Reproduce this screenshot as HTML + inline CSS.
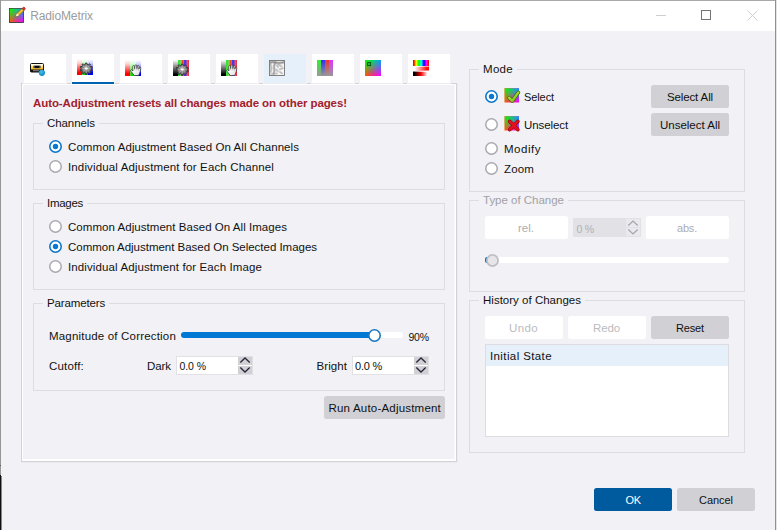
<!DOCTYPE html>
<html><head><meta charset="utf-8"><title>RadioMetrix</title>
<style>
html,body{margin:0;padding:0}
body{width:777px;height:530px;overflow:hidden;position:relative;background:#f1f1f6;font-family:"Liberation Sans", sans-serif}
#w div,#w svg,#w .t{position:absolute}
#w{position:absolute;left:0;top:0;width:777px;height:530px;overflow:hidden}
.t{white-space:pre;line-height:16px;font-family:"Liberation Sans", sans-serif}
</style></head><body><div id="w">

<div style="left:0px;top:0px;width:777px;height:31px;background:#fff"></div>
<div style="left:0px;top:0px;width:777px;height:1px;background:#a8a8a8"></div>
<div style="left:0px;top:0px;width:1px;height:475px;background:#969696"></div>
<div style="left:0px;top:465px;width:1px;height:1px;background:#5a5a5a"></div>
<div style="left:0px;top:475px;width:1px;height:55px;background:#101010"></div>
<div style="left:1px;top:476px;width:1px;height:54px;background:#84848a"></div>
<div style="left:775px;top:0px;width:1px;height:530px;background:#909090"></div>
<div style="left:776px;top:0px;width:1px;height:530px;background:#e4e4e4"></div>
<div style="left:656px;top:15px;width:10px;height:1px;background:#cfcfcf"></div>
<div style="left:701px;top:10px;width:10px;height:10px;box-sizing:border-box;border:1px solid #737373"></div>
<svg style="left:747px;top:10px" width="11" height="11" viewBox="0 0 11 11"><path d="M0.5 0.5 L10.5 10.5 M10.5 0.5 L0.5 10.5" stroke="#cfcfcf" stroke-width="1" fill="none"/></svg>
<div style="left:21px;top:83px;width:437px;height:380px;box-sizing:border-box;border:1px solid #ebebf0;border-top:none;border-left:none"></div>
<div style="left:21px;top:83px;width:436px;height:379px;box-sizing:border-box;border:1px solid #d2d2d7"></div>
<div style="left:22px;top:84px;width:434px;height:377px;box-sizing:border-box;border:1px solid #ffffff;border-bottom-width:2px"></div>
<div style="left:454px;top:84px;width:1px;height:376px;background:#f8f8fb"></div>
<div style="left:24px;top:54px;width:42px;height:29px;background:#ffffff"></div>
<div style="left:24px;top:83px;width:42px;height:1px;background:#ececf1"></div>
<div style="left:23px;top:83px;width:1px;height:1px;background:#f1f1f6"></div>
<div style="left:66px;top:83px;width:1px;height:1px;background:#f1f1f6"></div>
<div style="left:72px;top:54px;width:42px;height:29px;background:#ffffff"></div>
<div style="left:72px;top:83px;width:42px;height:1px;background:#ececf1"></div>
<div style="left:71px;top:83px;width:1px;height:1px;background:#f1f1f6"></div>
<div style="left:114px;top:83px;width:1px;height:1px;background:#f1f1f6"></div>
<div style="left:120px;top:54px;width:42px;height:29px;background:#ffffff"></div>
<div style="left:120px;top:83px;width:42px;height:1px;background:#ececf1"></div>
<div style="left:119px;top:83px;width:1px;height:1px;background:#f1f1f6"></div>
<div style="left:162px;top:83px;width:1px;height:1px;background:#f1f1f6"></div>
<div style="left:168px;top:54px;width:42px;height:29px;background:#ffffff"></div>
<div style="left:168px;top:83px;width:42px;height:1px;background:#ececf1"></div>
<div style="left:167px;top:83px;width:1px;height:1px;background:#f1f1f6"></div>
<div style="left:210px;top:83px;width:1px;height:1px;background:#f1f1f6"></div>
<div style="left:216px;top:54px;width:42px;height:29px;background:#ffffff"></div>
<div style="left:216px;top:83px;width:42px;height:1px;background:#ececf1"></div>
<div style="left:215px;top:83px;width:1px;height:1px;background:#f1f1f6"></div>
<div style="left:258px;top:83px;width:1px;height:1px;background:#f1f1f6"></div>
<div style="left:264px;top:54px;width:42px;height:29px;background:#e5f0fa"></div>
<div style="left:264px;top:83px;width:42px;height:1px;background:#ececf1"></div>
<div style="left:263px;top:83px;width:1px;height:1px;background:#f1f1f6"></div>
<div style="left:306px;top:83px;width:1px;height:1px;background:#f1f1f6"></div>
<div style="left:312px;top:54px;width:42px;height:29px;background:#ffffff"></div>
<div style="left:312px;top:83px;width:42px;height:1px;background:#ececf1"></div>
<div style="left:311px;top:83px;width:1px;height:1px;background:#f1f1f6"></div>
<div style="left:354px;top:83px;width:1px;height:1px;background:#f1f1f6"></div>
<div style="left:360px;top:54px;width:42px;height:29px;background:#ffffff"></div>
<div style="left:360px;top:83px;width:42px;height:1px;background:#ececf1"></div>
<div style="left:359px;top:83px;width:1px;height:1px;background:#f1f1f6"></div>
<div style="left:402px;top:83px;width:1px;height:1px;background:#f1f1f6"></div>
<div style="left:408px;top:54px;width:42px;height:29px;background:#ffffff"></div>
<div style="left:408px;top:83px;width:42px;height:1px;background:#ececf1"></div>
<div style="left:407px;top:83px;width:1px;height:1px;background:#f1f1f6"></div>
<div style="left:450px;top:83px;width:1px;height:1px;background:#f1f1f6"></div>
<div style="left:72px;top:82px;width:42px;height:2px;background:#0063b1"></div>
<div style="left:33px;top:123px;width:412px;height:67px;box-sizing:border-box;border:1px solid #dcdce1"></div>
<div style="left:43px;top:117px;width:56px;height:13px;background:#f1f1f6"></div>
<div style="left:33px;top:203px;width:412px;height:87px;box-sizing:border-box;border:1px solid #dcdce1"></div>
<div style="left:43px;top:197px;width:44px;height:13px;background:#f1f1f6"></div>
<div style="left:33px;top:303px;width:412px;height:88px;box-sizing:border-box;border:1px solid #dcdce1"></div>
<div style="left:43px;top:297px;width:66px;height:13px;background:#f1f1f6"></div>
<svg style="left:48.0px;top:139.0px" width="15" height="15" viewBox="0 0 15 15"><circle cx="7.5" cy="7.5" r="5.7" fill="#fff" stroke="#0b76cc" stroke-width="1.6"/><circle cx="7.5" cy="7.5" r="2.7" fill="#0878d0"/></svg>
<svg style="left:48.0px;top:159.0px" width="15" height="15" viewBox="0 0 15 15"><circle cx="7.5" cy="7.5" r="5.75" fill="#fff" stroke="#a9a9b0" stroke-width="1.5"/></svg>
<svg style="left:48.0px;top:219.0px" width="15" height="15" viewBox="0 0 15 15"><circle cx="7.5" cy="7.5" r="5.75" fill="#fff" stroke="#a9a9b0" stroke-width="1.5"/></svg>
<svg style="left:48.0px;top:239.0px" width="15" height="15" viewBox="0 0 15 15"><circle cx="7.5" cy="7.5" r="5.7" fill="#fff" stroke="#0b76cc" stroke-width="1.6"/><circle cx="7.5" cy="7.5" r="2.7" fill="#0878d0"/></svg>
<svg style="left:48.0px;top:259.0px" width="15" height="15" viewBox="0 0 15 15"><circle cx="7.5" cy="7.5" r="5.75" fill="#fff" stroke="#a9a9b0" stroke-width="1.5"/></svg>
<div style="left:181px;top:332px;width:222px;height:6px;background:#fff;border-radius:3px"></div>
<div style="left:181px;top:332px;width:194px;height:6px;background:#0078d4;border-radius:3px"></div>
<svg style="left:367px;top:328px" width="15" height="15" viewBox="0 0 15 15"><circle cx="7.5" cy="7.5" r="5.7" fill="#fff" stroke="#1878c0" stroke-width="1.6"/></svg>
<div style="left:176px;top:356px;width:77px;height:19px;box-sizing:border-box;background:#fff;border:1px solid #e0e0e5"></div><div style="left:238px;top:357px;width:14px;height:8px;background:#d0d0d5"></div><div style="left:238px;top:366px;width:14px;height:8px;background:#d0d0d5"></div><svg style="left:238px;top:356.4px" width="14" height="8" viewBox="0 0 14 8"><path d="M2.3 6.5 L7 2 L11.7 6.5" fill="none" stroke="#26263a" stroke-width="1.3"/></svg><svg style="left:238px;top:366.4px" width="14" height="8" viewBox="0 0 14 8"><path d="M2.3 1.5 L7 6 L11.7 1.5" fill="none" stroke="#26263a" stroke-width="1.3"/></svg>
<div style="left:352px;top:356px;width:77px;height:19px;box-sizing:border-box;background:#fff;border:1px solid #e0e0e5"></div><div style="left:414px;top:357px;width:14px;height:8px;background:#d0d0d5"></div><div style="left:414px;top:366px;width:14px;height:8px;background:#d0d0d5"></div><svg style="left:414px;top:356.4px" width="14" height="8" viewBox="0 0 14 8"><path d="M2.3 6.5 L7 2 L11.7 6.5" fill="none" stroke="#26263a" stroke-width="1.3"/></svg><svg style="left:414px;top:366.4px" width="14" height="8" viewBox="0 0 14 8"><path d="M2.3 1.5 L7 6 L11.7 1.5" fill="none" stroke="#26263a" stroke-width="1.3"/></svg>
<div style="left:324px;top:396px;width:121px;height:23px;background:#d0d0d5;border-radius:2.5px"></div>
<div style="left:469px;top:69px;width:276px;height:123px;box-sizing:border-box;border:1px solid #dcdce1"></div>
<div style="left:479px;top:63px;width:38px;height:13px;background:#f1f1f6"></div>
<div style="left:469px;top:200px;width:276px;height:92px;box-sizing:border-box;border:1px solid #dcdce1"></div>
<div style="left:479px;top:194px;width:89px;height:13px;background:#f1f1f6"></div>
<div style="left:469px;top:300px;width:276px;height:153px;box-sizing:border-box;border:1px solid #dcdce1"></div>
<div style="left:479px;top:294px;width:106px;height:13px;background:#f1f1f6"></div>
<svg style="left:484.0px;top:89.0px" width="15" height="15" viewBox="0 0 15 15"><circle cx="7.5" cy="7.5" r="5.7" fill="#fff" stroke="#0b76cc" stroke-width="1.6"/><circle cx="7.5" cy="7.5" r="2.7" fill="#0878d0"/></svg>
<svg style="left:484.0px;top:117.0px" width="15" height="15" viewBox="0 0 15 15"><circle cx="7.5" cy="7.5" r="5.75" fill="#fff" stroke="#a9a9b0" stroke-width="1.5"/></svg>
<svg style="left:484.0px;top:141.0px" width="15" height="15" viewBox="0 0 15 15"><circle cx="7.5" cy="7.5" r="5.75" fill="#fff" stroke="#a9a9b0" stroke-width="1.5"/></svg>
<svg style="left:484.0px;top:161.0px" width="15" height="15" viewBox="0 0 15 15"><circle cx="7.5" cy="7.5" r="5.75" fill="#fff" stroke="#a9a9b0" stroke-width="1.5"/></svg>
<div style="left:651px;top:85px;width:78px;height:23px;background:#d0d0d5;border-radius:2.5px"></div>
<div style="left:651px;top:113px;width:78px;height:23px;background:#d0d0d5;border-radius:2.5px"></div>
<div style="left:485px;top:216px;width:83px;height:23px;background:#fff;border-radius:2.5px"></div>
<div style="left:573px;top:218px;width:68px;height:19px;background:#e1e1e6"></div>
<div style="left:626px;top:219px;width:14px;height:8px;background:#e9e9ee"></div>
<div style="left:626px;top:228px;width:14px;height:8px;background:#e9e9ee"></div>
<svg style="left:626px;top:218.5px" width="14" height="8" viewBox="0 0 14 8"><path d="M2.3 6.5 L7 2 L11.7 6.5" fill="none" stroke="#a4a4ac" stroke-width="1.2"/></svg><svg style="left:626px;top:228.4px" width="14" height="8" viewBox="0 0 14 8"><path d="M2.3 1.5 L7 6 L11.7 1.5" fill="none" stroke="#a4a4ac" stroke-width="1.2"/></svg>
<div style="left:646px;top:216px;width:83px;height:23px;background:#fff;border-radius:2.5px"></div>
<div style="left:485px;top:257px;width:244px;height:6px;background:#fff;border-radius:3px"></div>
<div style="left:485px;top:257px;width:4px;height:6px;background:#0078d4;border-radius:2px 0 0 2px"></div>
<svg style="left:485px;top:253px" width="15" height="15" viewBox="0 0 15 15"><circle cx="7.5" cy="7.5" r="5.6" fill="#e6e6ea" stroke="#bebec4" stroke-width="1.8"/></svg>
<div style="left:485px;top:316px;width:78px;height:23px;background:#fff;border-radius:2.5px"></div>
<div style="left:568px;top:316px;width:78px;height:23px;background:#fff;border-radius:2.5px"></div>
<div style="left:651px;top:316px;width:78px;height:23px;background:#d0d0d5;border-radius:2.5px"></div>
<div style="left:485px;top:344px;width:244px;height:93px;box-sizing:border-box;background:#fff;border:1px solid #dcdce1"></div>
<div style="left:486px;top:345px;width:242px;height:21px;background:#e5f0fa"></div>
<div style="left:594px;top:488px;width:78px;height:23px;background:#005a9e;border-radius:2.5px"></div>
<div style="left:677px;top:488px;width:78px;height:23px;background:#d0d0d5;border-radius:2.5px"></div>
<svg width="0" height="0" style="left:0;top:0"><defs>
<radialGradient id="gg" cx="0.5" cy="0.45" r="0.6"><stop offset="0" stop-color="#c0c0c0"/><stop offset="0.4" stop-color="#868686"/><stop offset="1" stop-color="#444"/></radialGradient>
<linearGradient id="hg" x1="0" y1="0" x2="1" y2="1"><stop offset="0.3" stop-color="#ffffff"/><stop offset="1" stop-color="#dcdcdc"/></linearGradient>
<linearGradient id="vr" x1="0" y1="0" x2="0" y2="1"><stop offset="0" stop-color="#fff"/><stop offset="0.25" stop-color="#ffd0d0"/><stop offset="0.85" stop-color="#ff0000"/></linearGradient>
<linearGradient id="vg" x1="0" y1="0" x2="0" y2="1"><stop offset="0" stop-color="#fff"/><stop offset="0.25" stop-color="#d0ffd0"/><stop offset="0.85" stop-color="#00e000"/></linearGradient>
<linearGradient id="vb" x1="0" y1="0" x2="0" y2="1"><stop offset="0" stop-color="#fff"/><stop offset="0.25" stop-color="#d4d4ff"/><stop offset="0.85" stop-color="#0000f0"/></linearGradient>
<linearGradient id="vk" x1="0" y1="0" x2="0" y2="1"><stop offset="0" stop-color="#fff"/><stop offset="0.9" stop-color="#000"/></linearGradient>
<linearGradient id="ctop" x1="0" y1="0" x2="1" y2="0"><stop offset="0" stop-color="#00ff00"/><stop offset="0.5" stop-color="#00d870"/><stop offset="1" stop-color="#00a0ff"/></linearGradient>
<linearGradient id="cbot" x1="0" y1="0" x2="1" y2="0"><stop offset="0" stop-color="#ff5800"/><stop offset="0.5" stop-color="#ff2090"/><stop offset="1" stop-color="#ff00ff"/></linearGradient>
<linearGradient id="cmk" x1="0" y1="0" x2="0" y2="1"><stop offset="0" stop-color="#fff" stop-opacity="1"/><stop offset="0.5" stop-color="#fff" stop-opacity="0.55"/><stop offset="1" stop-color="#fff" stop-opacity="0"/></linearGradient>
<mask id="cm" maskContentUnits="objectBoundingBox" style="mask-type:alpha"><rect x="0" y="0" width="1" height="1" fill="url(#cmk)"/></mask>
<linearGradient id="hue" x1="0" y1="0" x2="1" y2="0"><stop offset="0.05" stop-color="#f00"/><stop offset="0.2" stop-color="#ff0"/><stop offset="0.36" stop-color="#0f0"/><stop offset="0.52" stop-color="#0ff"/><stop offset="0.68" stop-color="#00f"/><stop offset="0.84" stop-color="#f0f"/><stop offset="0.97" stop-color="#f00"/></linearGradient>
<linearGradient id="sat" x1="0" y1="0" x2="1" y2="0"><stop offset="0.1" stop-color="#fff"/><stop offset="0.85" stop-color="#ff1010"/></linearGradient>
<linearGradient id="val" x1="0" y1="0" x2="1" y2="0"><stop offset="0.08" stop-color="#000"/><stop offset="0.5" stop-color="#f00"/><stop offset="0.9" stop-color="#fff"/></linearGradient>
<linearGradient id="s1" x1="0" y1="0" x2="0" y2="1"><stop offset="0" stop-color="#30f030"/><stop offset="1" stop-color="#989898"/></linearGradient>
<linearGradient id="s2" x1="0" y1="0" x2="0" y2="1"><stop offset="0" stop-color="#3030f0"/><stop offset="1" stop-color="#989898"/></linearGradient>
<linearGradient id="s3" x1="0" y1="0" x2="0" y2="1"><stop offset="0" stop-color="#f03030"/><stop offset="1" stop-color="#989898"/></linearGradient>
<linearGradient id="s4" x1="0" y1="0" x2="0" y2="1"><stop offset="0" stop-color="#e030ff"/><stop offset="1" stop-color="#989898"/></linearGradient>
<linearGradient id="cas" x1="0" y1="0" x2="0" y2="1"><stop offset="0" stop-color="#fff"/><stop offset="0.28" stop-color="#fff4c0"/><stop offset="0.4" stop-color="#ffd040"/><stop offset="1" stop-color="#f0a010"/></linearGradient>
<radialGradient id="ball" cx="0.4" cy="0.35" r="0.7"><stop offset="0" stop-color="#40c4f0"/><stop offset="1" stop-color="#0a80c0"/></radialGradient>
<linearGradient id="chk" x1="0" y1="0" x2="1" y2="1"><stop offset="0" stop-color="#c8f040"/><stop offset="1" stop-color="#70c010"/></linearGradient>
</defs></svg>
<svg style="left:29px;top:59px" width="18" height="18" viewBox="0 0 18 18"><rect x="1.5" y="4.5" width="13" height="8.5" rx="1" fill="url(#cas)" stroke="#111" stroke-width="1"/><rect x="1.5" y="10.6" width="13" height="2.4" rx="0.6" fill="#111"/><rect x="4" y="11.2" width="6" height="1" fill="#8a8a8a"/><rect x="4.2" y="6.6" width="7.6" height="2.6" rx="1.2" fill="#4a4a58"/><rect x="5.8" y="7" width="4.4" height="1.8" rx="0.9" fill="#000"/><circle cx="12.9" cy="13.8" r="3.1" fill="url(#ball)"/></svg>
<svg style="left:77px;top:59px" width="17" height="17" viewBox="0 0 17 17"><rect x="0" y="0" width="5.3" height="16" fill="url(#vr)"/><rect x="5.3" y="0" width="5.4" height="16" fill="url(#vg)"/><rect x="10.7" y="0" width="5.3" height="16" fill="url(#vb)"/><g transform="translate(9.2 9.7) scale(1.1 1) translate(-9.2 -9.7)"><path d="M8.49 4.04 L9.91 4.04 L10.02 5.38 L11.07 5.72 L11.95 4.71 L13.10 5.54 L12.41 6.69 L13.06 7.58 L14.36 7.27 L14.80 8.63 L13.57 9.15 L13.57 10.25 L14.80 10.77 L14.36 12.13 L13.06 11.82 L12.41 12.71 L13.10 13.86 L11.95 14.69 L11.07 13.68 L10.02 14.02 L9.91 15.36 L8.49 15.36 L8.38 14.02 L7.33 13.68 L6.45 14.69 L5.30 13.86 L5.99 12.71 L5.34 11.82 L4.04 12.13 L3.60 10.77 L4.83 10.25 L4.83 9.15 L3.60 8.63 L4.04 7.27 L5.34 7.58 L5.99 6.69 L5.30 5.54 L6.45 4.71 L7.33 5.72 L8.38 5.38Z" fill="url(#gg)" stroke="#333" stroke-width="0.8" stroke-linejoin="round"/><line x1="10.80" y1="9.70" x2="13.50" y2="9.70" stroke="#d0d0d0" stroke-width="0.9" opacity="0.55"/><line x1="10.33" y1="10.83" x2="12.24" y2="12.74" stroke="#d0d0d0" stroke-width="0.9" opacity="0.55"/><line x1="9.20" y1="11.30" x2="9.20" y2="14.00" stroke="#d0d0d0" stroke-width="0.9" opacity="0.55"/><line x1="8.07" y1="10.83" x2="6.16" y2="12.74" stroke="#d0d0d0" stroke-width="0.9" opacity="0.55"/><line x1="7.60" y1="9.70" x2="4.90" y2="9.70" stroke="#d0d0d0" stroke-width="0.9" opacity="0.55"/><line x1="8.07" y1="8.57" x2="6.16" y2="6.66" stroke="#d0d0d0" stroke-width="0.9" opacity="0.55"/><line x1="9.20" y1="8.10" x2="9.20" y2="5.40" stroke="#d0d0d0" stroke-width="0.9" opacity="0.55"/><line x1="10.33" y1="8.57" x2="12.24" y2="6.66" stroke="#d0d0d0" stroke-width="0.9" opacity="0.55"/><ellipse cx="9.2" cy="9.6" rx="1.4" ry="1.0" fill="#fff"/></g></svg>
<svg style="left:125px;top:60px" width="17" height="17" viewBox="0 0 17 17"><rect x="0" y="0" width="5.3" height="16" fill="url(#vr)"/><rect x="5.3" y="0" width="5.4" height="16" fill="url(#vg)"/><rect x="10.7" y="0" width="5.3" height="16" fill="url(#vb)"/><g transform="translate(0 0)"><path d="M9.3 15.5 L6.0 11.3 Q5.1 10.0 6.3 9.7 L8.0 10.9 L7.7 6.6 Q7.8 5.5 8.6 5.5 Q9.4 5.5 9.5 6.6 L9.7 8.6 L9.9 6.0 Q10.0 4.8 10.9 4.8 Q11.7 4.8 11.8 6.0 L11.9 8.6 L12.3 6.4 Q12.5 5.3 13.3 5.4 Q14.0 5.5 14.0 6.6 L13.8 9.0 L14.5 7.8 Q15.0 6.9 15.6 7.3 Q16.1 7.7 15.8 8.6 L15.2 11.5 Q14.6 13.5 13.6 15.5 Z" fill="url(#hg)" stroke="#2c2c2c" stroke-width="0.7" stroke-linejoin="round"/><path d="M9.7 8.6 L9.8 10.2 M11.9 8.6 L11.9 10.2 M13.8 9 L13.6 10.4" stroke="#777" stroke-width="0.5" fill="none"/></g></svg>
<svg style="left:173px;top:60px" width="17" height="17" viewBox="0 0 17 17"><rect x="0" y="0" width="5" height="16" fill="url(#vk)"/><rect x="5" y="0" width="2.8" height="16" fill="#3ce03c"/><rect x="7.8" y="0" width="1" height="16" fill="#a0a020"/><rect x="8.8" y="0" width="2" height="16" fill="#f04828"/><rect x="10.8" y="0" width="2.2" height="16" fill="#4838e8"/><rect x="13" y="0" width="1.2" height="16" fill="#a040b0"/><rect x="14.2" y="0" width="1.8" height="16" fill="#f03040"/><g transform="translate(9.2 9.7) scale(1.1 1) translate(-9.2 -9.7)"><path d="M8.49 4.04 L9.91 4.04 L10.02 5.38 L11.07 5.72 L11.95 4.71 L13.10 5.54 L12.41 6.69 L13.06 7.58 L14.36 7.27 L14.80 8.63 L13.57 9.15 L13.57 10.25 L14.80 10.77 L14.36 12.13 L13.06 11.82 L12.41 12.71 L13.10 13.86 L11.95 14.69 L11.07 13.68 L10.02 14.02 L9.91 15.36 L8.49 15.36 L8.38 14.02 L7.33 13.68 L6.45 14.69 L5.30 13.86 L5.99 12.71 L5.34 11.82 L4.04 12.13 L3.60 10.77 L4.83 10.25 L4.83 9.15 L3.60 8.63 L4.04 7.27 L5.34 7.58 L5.99 6.69 L5.30 5.54 L6.45 4.71 L7.33 5.72 L8.38 5.38Z" fill="url(#gg)" stroke="#333" stroke-width="0.8" stroke-linejoin="round"/><line x1="10.80" y1="9.70" x2="13.50" y2="9.70" stroke="#d0d0d0" stroke-width="0.9" opacity="0.55"/><line x1="10.33" y1="10.83" x2="12.24" y2="12.74" stroke="#d0d0d0" stroke-width="0.9" opacity="0.55"/><line x1="9.20" y1="11.30" x2="9.20" y2="14.00" stroke="#d0d0d0" stroke-width="0.9" opacity="0.55"/><line x1="8.07" y1="10.83" x2="6.16" y2="12.74" stroke="#d0d0d0" stroke-width="0.9" opacity="0.55"/><line x1="7.60" y1="9.70" x2="4.90" y2="9.70" stroke="#d0d0d0" stroke-width="0.9" opacity="0.55"/><line x1="8.07" y1="8.57" x2="6.16" y2="6.66" stroke="#d0d0d0" stroke-width="0.9" opacity="0.55"/><line x1="9.20" y1="8.10" x2="9.20" y2="5.40" stroke="#d0d0d0" stroke-width="0.9" opacity="0.55"/><line x1="10.33" y1="8.57" x2="12.24" y2="6.66" stroke="#d0d0d0" stroke-width="0.9" opacity="0.55"/><ellipse cx="9.2" cy="9.6" rx="1.4" ry="1.0" fill="#fff"/></g></svg>
<svg style="left:221px;top:60px" width="17" height="17" viewBox="0 0 17 17"><rect x="0" y="0" width="5" height="16" fill="url(#vk)"/><rect x="5" y="0" width="2.8" height="16" fill="#3ce03c"/><rect x="7.8" y="0" width="1" height="16" fill="#a0a020"/><rect x="8.8" y="0" width="2" height="16" fill="#f04828"/><rect x="10.8" y="0" width="2.2" height="16" fill="#4838e8"/><rect x="13" y="0" width="1.2" height="16" fill="#a040b0"/><rect x="14.2" y="0" width="1.8" height="16" fill="#f03040"/><g transform="translate(0 0)"><path d="M9.3 15.5 L6.0 11.3 Q5.1 10.0 6.3 9.7 L8.0 10.9 L7.7 6.6 Q7.8 5.5 8.6 5.5 Q9.4 5.5 9.5 6.6 L9.7 8.6 L9.9 6.0 Q10.0 4.8 10.9 4.8 Q11.7 4.8 11.8 6.0 L11.9 8.6 L12.3 6.4 Q12.5 5.3 13.3 5.4 Q14.0 5.5 14.0 6.6 L13.8 9.0 L14.5 7.8 Q15.0 6.9 15.6 7.3 Q16.1 7.7 15.8 8.6 L15.2 11.5 Q14.6 13.5 13.6 15.5 Z" fill="url(#hg)" stroke="#2c2c2c" stroke-width="0.7" stroke-linejoin="round"/><path d="M9.7 8.6 L9.8 10.2 M11.9 8.6 L11.9 10.2 M13.8 9 L13.6 10.4" stroke="#777" stroke-width="0.5" fill="none"/></g></svg>
<svg style="left:269px;top:60px" width="16" height="16" viewBox="0 0 16 16"><defs><clipPath id="mc"><rect x="1" y="1" width="14" height="14"/></clipPath></defs><rect x="0.5" y="0.5" width="15" height="15" fill="#f8f8f8" stroke="#747474" stroke-width="0.9"/><g clip-path="url(#mc)"><path d="M1 2.4 Q4 1.6 7 2.6 T14.8 2.3" fill="none" stroke="#707070" stroke-width="3.3000000000000003" opacity="0.22" stroke-linecap="round"/><path d="M1 2.4 Q4 1.6 7 2.6 T14.8 2.3" fill="none" stroke="#707070" stroke-width="2.0999999999999996" opacity="0.35" stroke-linecap="round"/><path d="M1 2.4 Q4 1.6 7 2.6 T14.8 2.3" fill="none" stroke="#707070" stroke-width="1.0499999999999998" opacity="0.5" stroke-linecap="round"/><path d="M6.2 2.6 Q4.6 6 5.2 8.6 T4.6 13.8" fill="none" stroke="#808080" stroke-width="2.8600000000000003" opacity="0.22" stroke-linecap="round"/><path d="M6.2 2.6 Q4.6 6 5.2 8.6 T4.6 13.8" fill="none" stroke="#808080" stroke-width="1.8199999999999998" opacity="0.35" stroke-linecap="round"/><path d="M6.2 2.6 Q4.6 6 5.2 8.6 T4.6 13.8" fill="none" stroke="#808080" stroke-width="0.9099999999999999" opacity="0.5" stroke-linecap="round"/><path d="M1.4 3.5 L2.4 8.5 L1.6 12" fill="none" stroke="#a0a0a0" stroke-width="2.8600000000000003" opacity="0.22" stroke-linecap="round"/><path d="M1.4 3.5 L2.4 8.5 L1.6 12" fill="none" stroke="#a0a0a0" stroke-width="1.8199999999999998" opacity="0.35" stroke-linecap="round"/><path d="M1.4 3.5 L2.4 8.5 L1.6 12" fill="none" stroke="#a0a0a0" stroke-width="0.9099999999999999" opacity="0.5" stroke-linecap="round"/><path d="M9.5 4.6 L12.5 6.4 M10.8 9.2 L13.8 8.2 M7.4 9.6 L8.6 11.2 M11 12 L13 13.4 M8 5.5 L9 7" fill="none" stroke="#a0a0a0" stroke-width="2.64" opacity="0.22" stroke-linecap="round"/><path d="M9.5 4.6 L12.5 6.4 M10.8 9.2 L13.8 8.2 M7.4 9.6 L8.6 11.2 M11 12 L13 13.4 M8 5.5 L9 7" fill="none" stroke="#a0a0a0" stroke-width="1.68" opacity="0.35" stroke-linecap="round"/><path d="M9.5 4.6 L12.5 6.4 M10.8 9.2 L13.8 8.2 M7.4 9.6 L8.6 11.2 M11 12 L13 13.4 M8 5.5 L9 7" fill="none" stroke="#a0a0a0" stroke-width="0.84" opacity="0.5" stroke-linecap="round"/><path d="M2 14.2 L8 13.4" fill="none" stroke="#a8a8a8" stroke-width="2.4200000000000004" opacity="0.22" stroke-linecap="round"/><path d="M2 14.2 L8 13.4" fill="none" stroke="#a8a8a8" stroke-width="1.54" opacity="0.35" stroke-linecap="round"/><path d="M2 14.2 L8 13.4" fill="none" stroke="#a8a8a8" stroke-width="0.77" opacity="0.5" stroke-linecap="round"/></g></svg>
<svg style="left:317px;top:60px" width="16" height="16" viewBox="0 0 16 16"><rect x="0" y="0" width="4" height="16" fill="url(#s1)"/><rect x="4" y="0" width="4" height="16" fill="url(#s2)"/><rect x="8" y="0" width="4" height="16" fill="url(#s3)"/><rect x="12" y="0" width="4" height="16" fill="url(#s4)"/></svg>
<svg style="left:365px;top:60px" width="16" height="16" viewBox="0 0 16 16"><rect x="0" y="0" width="16" height="16" fill="url(#cbot)"/><rect x="0" y="0" width="16" height="16" fill="url(#ctop)" mask="url(#cm)"/><rect x="2.6" y="2.6" width="3" height="3" fill="#14c436" stroke="#0a4a14" stroke-width="0.9"/></svg>
<svg style="left:413px;top:60px" width="16" height="16" viewBox="0 0 16 16"><rect x="0" y="0" width="16" height="6" fill="url(#hue)"/><path d="M0 7 L16 6.6 L16 10.6 L0 11 Z" fill="url(#sat)"/><path d="M0 11.6 L16 12 L16 16 L0 16 Z" fill="url(#val)"/></svg>
<svg style="left:9px;top:6px" width="18" height="18" viewBox="0 0 18 18"><rect x="0.5" y="2.5" width="14" height="14" fill="url(#cbot)" stroke="#2c2c2c" stroke-width="0.8"/><rect x="0.5" y="2.5" width="14" height="14" fill="url(#ctop)" mask="url(#cm)"/><path d="M7 10.2 L7.8 7.6 L13 2.4 L15 4.4 L9.8 9.6 Z" fill="#f4c030" stroke="#7a5a10" stroke-width="0.6"/><path d="M7 10.2 L7.8 7.6 L9.8 9.6 Z" fill="#fff"/><path d="M13 2.4 L14 1.4 Q15 0.8 15.8 1.6 Q16.6 2.4 16 3.4 L15 4.4 Z" fill="#e83030" stroke="#801010" stroke-width="0.5"/></svg>
<svg style="left:504px;top:87px" width="18" height="18" viewBox="0 0 18 18"><rect x="0.5" y="1.2" width="14.5" height="14.3" fill="url(#cbot)"/><rect x="0.5" y="1.2" width="14.5" height="14.3" fill="url(#ctop)" mask="url(#cm)"/><path d="M5.2 10.8 L8.2 14 L14.4 5.4" fill="none" stroke="#3a6a08" stroke-width="3.6" stroke-linecap="round" stroke-linejoin="round"/><path d="M5.2 10.8 L8.2 14 L14.4 5.4" fill="none" stroke="url(#chk)" stroke-width="2.3" stroke-linecap="round" stroke-linejoin="round"/></svg>
<svg style="left:504px;top:115px" width="18" height="18" viewBox="0 0 18 18"><rect x="0.5" y="1.2" width="14.5" height="14.3" fill="url(#cbot)"/><rect x="0.5" y="1.2" width="14.5" height="14.3" fill="url(#ctop)" mask="url(#cm)"/><path d="M5.8 6.4 L13.8 14.6 M13.8 6.4 L5.8 14.6" fill="none" stroke="#8a0008" stroke-width="3.6" stroke-linecap="round"/><path d="M5.8 6.4 L13.8 14.6 M13.8 6.4 L5.8 14.6" fill="none" stroke="#e8101c" stroke-width="2.4" stroke-linecap="round"/></svg>
<span class="t" style="left:30.2px;top:7.80px;font-size:12px;font-weight:400;color:#9c9c9c;letter-spacing:-0.112px">RadioMetrix</span>
<span class="t" style="left:33px;top:94.80px;font-size:11.5px;font-weight:700;color:#a3212b;letter-spacing:-0.089px">Auto-Adjustment resets all changes made on other pages!</span>
<span class="t" style="left:47px;top:114.80px;font-size:11.5px;font-weight:400;color:#111111;letter-spacing:-0.074px">Channels</span>
<span class="t" style="left:68px;top:138.80px;font-size:11.5px;font-weight:400;color:#111111;letter-spacing:0.072px">Common Adjustment Based On All Channels</span>
<span class="t" style="left:68px;top:158.80px;font-size:11.5px;font-weight:400;color:#111111;letter-spacing:0.139px">Individual Adjustment for Each Channel</span>
<span class="t" style="left:47px;top:194.80px;font-size:11.5px;font-weight:400;color:#111111;letter-spacing:-0.286px">Images</span>
<span class="t" style="left:68px;top:218.80px;font-size:11.5px;font-weight:400;color:#111111;letter-spacing:0.045px">Common Adjustment Based On All Images</span>
<span class="t" style="left:68px;top:238.80px;font-size:11.5px;font-weight:400;color:#111111;letter-spacing:-0.022px">Common Adjustment Based On Selected Images</span>
<span class="t" style="left:68px;top:258.80px;font-size:11.5px;font-weight:400;color:#111111;letter-spacing:0.115px">Individual Adjustment for Each Image</span>
<span class="t" style="left:47px;top:294.80px;font-size:11.5px;font-weight:400;color:#111111;letter-spacing:-0.144px">Parameters</span>
<span class="t" style="left:49px;top:327.80px;font-size:11.5px;font-weight:400;color:#111111;letter-spacing:0.185px">Magnitude of Correction</span>
<span class="t" style="left:408.5px;top:328.80px;font-size:10.5px;font-weight:400;color:#111111;letter-spacing:-0.276px">90%</span>
<span class="t" style="left:49px;top:357.80px;font-size:11.5px;font-weight:400;color:#111111;letter-spacing:0.190px">Cutoff:</span>
<span class="t" style="left:147px;top:357.80px;font-size:11.5px;font-weight:400;color:#111111;letter-spacing:-0.070px">Dark</span>
<span class="t" style="left:179.5px;top:357.80px;font-size:10.5px;font-weight:400;color:#111111;letter-spacing:-0.073px">0.0 %</span>
<span class="t" style="left:316.5px;top:357.80px;font-size:11.5px;font-weight:400;color:#111111;letter-spacing:0.076px">Bright</span>
<span class="t" style="left:355px;top:357.80px;font-size:11.0px;font-weight:400;color:#111111;letter-spacing:-0.229px">0.0 %</span>
<span class="t" style="left:328.5px;top:399.80px;font-size:11.5px;font-weight:400;color:#111111;letter-spacing:0.201px">Run Auto-Adjustment</span>
<span class="t" style="left:483px;top:60.80px;font-size:11.5px;font-weight:400;color:#111111;letter-spacing:0.305px">Mode</span>
<span class="t" style="left:524px;top:88.80px;font-size:11.0px;font-weight:400;color:#111111;letter-spacing:-0.096px">Select</span>
<span class="t" style="left:524px;top:116.80px;font-size:11.5px;font-weight:400;color:#111111;letter-spacing:-0.094px">Unselect</span>
<span class="t" style="left:504px;top:140.80px;font-size:11.5px;font-weight:400;color:#111111;letter-spacing:0.521px">Modify</span>
<span class="t" style="left:504px;top:160.80px;font-size:11.5px;font-weight:400;color:#111111;letter-spacing:0.148px">Zoom</span>
<span class="t" style="left:667px;top:88.80px;font-size:11.5px;font-weight:400;color:#111111;letter-spacing:-0.131px">Select All</span>
<span class="t" style="left:660px;top:116.80px;font-size:11.5px;font-weight:400;color:#111111;letter-spacing:-0.008px">Unselect All</span>
<span class="t" style="left:483px;top:191.80px;font-size:11.5px;font-weight:400;color:#a2a2a6;letter-spacing:-0.015px">Type of Change</span>
<span class="t" style="left:518px;top:219.80px;font-size:11.5px;font-weight:400;color:#adadb1;letter-spacing:0.004px">rel.</span>
<span class="t" style="left:576.5px;top:220.80px;font-size:10.5px;font-weight:400;color:#b0b0b6;letter-spacing:-0.201px">0 %</span>
<span class="t" style="left:677px;top:219.80px;font-size:11.0px;font-weight:400;color:#adadb1;letter-spacing:-0.201px">abs.</span>
<span class="t" style="left:483px;top:291.80px;font-size:11.5px;font-weight:400;color:#111111;letter-spacing:0.011px">History of Changes</span>
<span class="t" style="left:509px;top:319.80px;font-size:11.5px;font-weight:400;color:#bbbbc0;letter-spacing:0.375px">Undo</span>
<span class="t" style="left:593px;top:319.80px;font-size:11.5px;font-weight:400;color:#bbbbc0;letter-spacing:-0.125px">Redo</span>
<span class="t" style="left:676px;top:319.80px;font-size:11.0px;font-weight:400;color:#111111;letter-spacing:-0.148px">Reset</span>
<span class="t" style="left:490px;top:347.80px;font-size:11.5px;font-weight:400;color:#111111;letter-spacing:0.392px">Initial State</span>
<span class="t" style="left:625.5px;top:491.80px;font-size:11.0px;font-weight:400;color:#ffffff;letter-spacing:-0.201px">OK</span>
<span class="t" style="left:699px;top:491.80px;font-size:11.0px;font-weight:400;color:#111111;letter-spacing:-0.043px">Cancel</span>
</div></body></html>
